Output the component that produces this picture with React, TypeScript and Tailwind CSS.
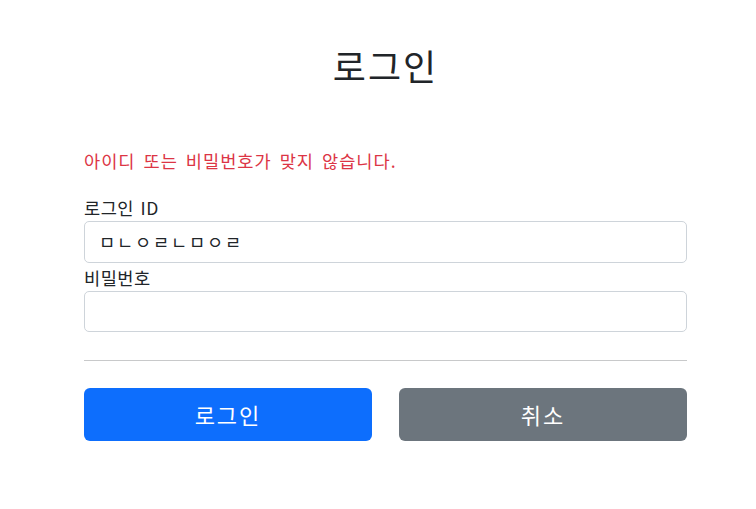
export default function App() {
  return (
    <div
      className="min-h-[509px] bg-white text-[#212529] text-[17.6px] leading-[1.5]"
      style={{ fontFamily: '"Noto Sans CJK KR", "Noto Sans", sans-serif' }}
    >
      <div className="ml-[84px] w-[603px] pt-[44px]">
        <div className="text-center">
          <h2 className="text-[36px] leading-[42px] font-normal tracking-[2px]">로그인</h2>
        </div>

        <form className="mt-[62px]">
          <p className="text-[#dc3545] h-[26px] leading-[26px] tracking-[1px] [word-spacing:3px]">
            아이디 또는 비밀번호가 맞지 않습니다.
          </p>

          <div className="mt-[21px]">
            <label className="block h-[26px] leading-[26px] tracking-[0.5px] [word-spacing:2px]">로그인 ID</label>
            <div className="h-[42px] w-full rounded-[5px] border border-[#ced4da] flex items-center pl-[14px]">
              <span className="text-[17.6px] tracking-[1.8px] text-[#212529]">ㅁㄴㅇㄹㄴㅁㅇㄹ</span>
            </div>
          </div>

          <div className="mt-[2px]">
            <label className="block h-[26px] leading-[26px] tracking-[0.5px]">비밀번호</label>
            <div className="h-[41px] w-full rounded-[5px] border border-[#ced4da]" />
          </div>

          <hr className="mt-[28px] border-t border-[#c8c9ca]" />

          <div className="mt-[27px] flex gap-[27px]">
            <button
              type="button"
              className="flex-1 h-[53px] rounded-[6px] bg-[#0d6efd] text-white text-[22px] tracking-[2px]"
            >
              로그인
            </button>
            <button
              type="button"
              className="flex-1 h-[53px] rounded-[6px] bg-[#6c757d] text-white text-[22px] tracking-[2px]"
            >
              취소
            </button>
          </div>
        </form>
      </div>
    </div>
  );
}
